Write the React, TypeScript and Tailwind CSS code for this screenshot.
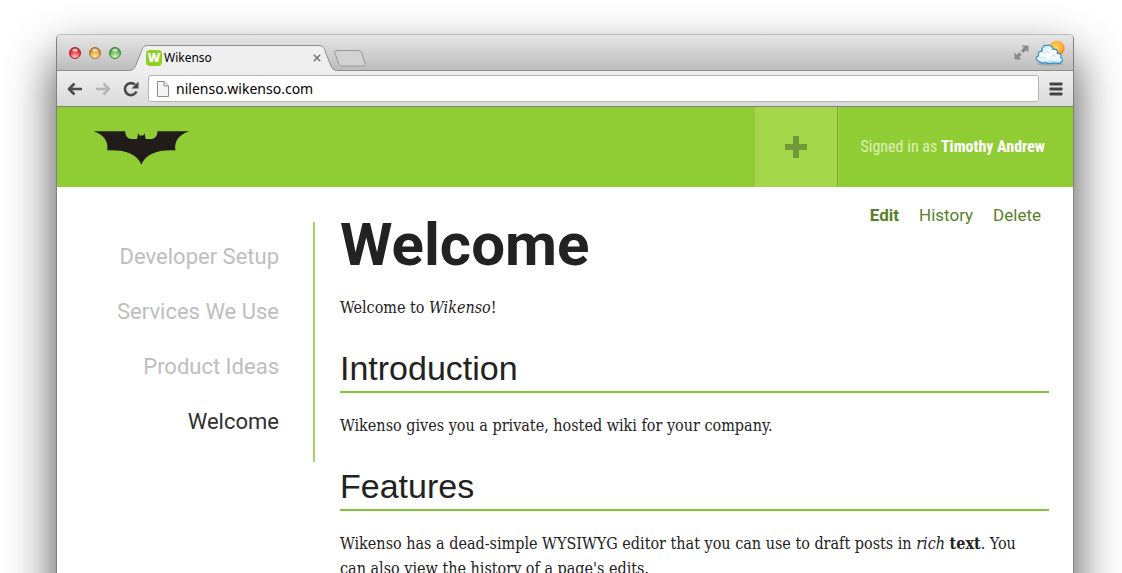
import type { ReactNode } from 'react';

const pages = [
  { name: 'Developer Setup', current: false },
  { name: 'Services We Use', current: false },
  { name: 'Product Ideas', current: false },
  { name: 'Welcome', current: true },
];

function TrafficLights() {
  const lights = [
    { label: 'Close window', id: 'red', edge: '#a3252c', mid: '#ef4650', glow: '#ffc9c9' },
    { label: 'Minimize window', id: 'amber', edge: '#a5702a', mid: '#f0ad45', glow: '#fff0b8' },
    { label: 'Zoom window', id: 'green', edge: '#42803a', mid: '#7cc565', glow: '#d9f8c4' },
  ];
  return (
    <div className="flex gap-2">
      {lights.map((l) => (
        <button key={l.id} type="button" aria-label={l.label} className="size-3">
          <svg viewBox="0 0 12 12" className="block size-3">
            <defs>
              <radialGradient id={l.id} cx="0.5" cy="0.85" r="0.8">
                <stop offset="0" stopColor={l.glow} />
                <stop offset="0.55" stopColor={l.mid} />
                <stop offset="1" stopColor={l.edge} />
              </radialGradient>
            </defs>
            <circle cx="6" cy="6" r="5.5" fill={`url(#${l.id})`} stroke={l.edge} strokeWidth="1" />
            <ellipse cx="6" cy="3.2" rx="2.8" ry="1.6" fill="#fff" opacity="0.65" />
          </svg>
        </button>
      ))}
    </div>
  );
}

function Tab() {
  return (
    <div className="relative ml-2 flex h-[25px] w-[212px] items-center self-end pl-[17px] pr-5">
      <svg viewBox="0 0 212 26" className="absolute left-0 top-0 h-[26px] w-[212px]" aria-hidden="true">
        <path
          d="M0 25.500C4 25.500 5.500 23.500 7 20L13 4.500C14.200 1.500 15.500 0.500 18.500 0.500H190C193 0.500 194.500 1.500 195.500 4.500L201.500 20C203 23.500 204.500 25.500 209 25.500V26H0Z"
          fill="#efefef"
        />
        <path
          d="M0 25.500C4 25.500 5.500 23.500 7 20L13 4.500C14.200 1.500 15.500 0.500 18.500 0.500H190C193 0.500 194.500 1.500 195.500 4.500L201.500 20C203 23.500 204.500 25.500 209 25.500"
          fill="none"
          stroke="#8d8d8d"
        />
      </svg>
      <span
        aria-hidden="true"
        className="relative flex size-4 items-center justify-center rounded-sm bg-[#8fd022] font-['Open_Sans',sans-serif] text-xs font-extrabold text-white"
      >
        W
      </span>
      <span className="relative ml-0.5 flex-1 font-['Noto_Sans',sans-serif] text-xs leading-4 text-black">Wikenso</span>
      <button type="button" aria-label="Close tab" className="relative">
        <svg viewBox="0 0 8 8" className="block size-2" stroke="#777" strokeWidth="1.6">
          <path d="M0.800 0.800L7.200 7.200M7.200 0.800L0.800 7.200" />
        </svg>
      </button>
    </div>
  );
}

function Weather() {
  return (
    <svg viewBox="0 0 32 28" className="h-7 w-8" aria-hidden="true">
      <defs>
        <radialGradient id="sun" cx="0.45" cy="0.4" r="0.6">
          <stop offset="0" stopColor="#ffd85c" />
          <stop offset="0.6" stopColor="#ffb13b" />
          <stop offset="1" stopColor="#ef7d1c" />
        </radialGradient>
        <linearGradient id="cloud" x1="0" y1="0" x2="0" y2="1">
          <stop offset="0" stopColor="#d3effd" />
          <stop offset="0.5" stopColor="#ffffff" />
          <stop offset="0.8" stopColor="#e8f7ff" />
          <stop offset="1" stopColor="#8fd0f4" />
        </linearGradient>
      </defs>
      <ellipse cx="15" cy="25" rx="13" ry="1.800" fill="#777" opacity="0.35" />
      <circle cx="22" cy="9.500" r="7.600" fill="url(#sun)" stroke="#f4b878" strokeWidth="0.800" />
      <path
        d="M4 22.500C0.500 21.500 0.500 17.500 3.500 17C2.500 14 4.500 12 7 12.500C6.500 8 9 6 12 6.500C15 5.500 18 7.500 18 10.200C21 9.500 23.500 12 22.500 14.500C25.500 14 27 16.500 25.500 18.500C28.500 19.500 28 23 25.500 23.700C23 25 20 24.300 18.500 23.800C15 25.300 12 24.500 10.500 23.500C8 24.500 5.500 24 4 22.500Z"
        fill="url(#cloud)"
        stroke="#3390c6"
        strokeWidth="1.200"
      />
      <path
        d="M9 15C10 12 13 12.500 14 14M16 18C17.500 15.500 20.500 16 21 18M5 19C6.500 17.500 9 18 9.500 20"
        fill="none"
        stroke="#a9dcf5"
        strokeWidth="1"
      />
    </svg>
  );
}

function TitleBar() {
  return (
    <div className="flex h-9 items-center border-b border-[#8d8d8d] bg-linear-to-b from-[#e6e6e6] to-[#bdbdbd] pl-3">
      <TrafficLights />
      <Tab />
      <button type="button" aria-label="New tab" className="-ml-2 mt-3">
        <svg viewBox="0 0 34 17" className="block h-[17px] w-[34px]" fill="#d2d2d2" stroke="#969696">
          <path d="M4 0.500H25C27 0.500 28 1 28.800 3L32 13C32.500 15 32 16 30 16H10C7.500 16 6.500 15.200 5.500 13L1.800 3C1 1 1.500 0.500 4 0.500Z" />
        </svg>
      </button>
      <div className="ml-auto flex items-center gap-1.5 pr-1.5">
        <button type="button" aria-label="Full screen">
          <svg viewBox="0 0 15 15" className="block size-[15px]" fill="#8b8b8b">
            <path d="M7.500 0.500H14.500V7.500L12.200 5.200L9.300 8.100L6.900 5.700L9.800 2.800ZM7.500 14.500H0.500V7.500L2.800 9.800L5.300 7.300L7.700 9.700L5.200 12.200Z" />
          </svg>
        </button>
        <Weather />
      </div>
    </div>
  );
}

function NavButton({ label, children }: { label: string; children: ReactNode }) {
  return (
    <button type="button" aria-label={label} className="shrink-0">
      <svg viewBox="0 0 16 16" className="block size-4" fill="none">
        {children}
      </svg>
    </button>
  );
}

function Toolbar() {
  return (
    <div className="flex h-9 items-center border-b border-[#7f7f7f] bg-linear-to-b from-[#efefef] to-[#dadada] px-2.5">
      <div className="flex gap-3">
        <NavButton label="Back">
          <path d="M15 8H2M7.500 2.500L2 8L7.500 13.500" stroke="#4b4b4b" strokeWidth="2.600" strokeLinejoin="round" />
        </NavButton>
        <NavButton label="Forward">
          <path d="M1 8H14M8.500 2.500L14 8L8.500 13.500" stroke="#b5b5b5" strokeWidth="2.600" strokeLinejoin="round" />
        </NavButton>
        <NavButton label="Reload">
          <path d="M13.500 10.500A6 6 0 1 1 12 3.600" stroke="#4b4b4b" strokeWidth="2.600" />
          <path d="M15.500 0.500V7.500H8.500Z" fill="#4b4b4b" />
        </NavButton>
      </div>
      <label className="ml-[9px] flex h-[27px] flex-1 items-center rounded-[3px] border border-[#b4b4b4] bg-white pl-2">
        <svg viewBox="0 0 12 16" className="h-4 w-3 shrink-0" fill="#f5f5f5" stroke="#8d8d8d" aria-hidden="true">
          <path d="M0.500 0.500H7L11.500 5V15.500H0.500ZM7 0.500V5H11.500" />
        </svg>
        <input
          aria-label="Address"
          defaultValue="nilenso.wikenso.com"
          className="ml-[7px] min-w-0 flex-1 bg-transparent font-['Noto_Sans',sans-serif] text-sm text-black outline-none"
        />
      </label>
      <button type="button" aria-label="Menu" className="ml-2.5">
        <svg viewBox="0 0 14 14" className="block size-3.5" fill="#444">
          <rect x="0.500" y="0.500" width="13" height="3" rx="0.800" />
          <rect x="0.500" y="5.500" width="13" height="3" rx="0.800" />
          <rect x="0.500" y="10.500" width="13" height="3" rx="0.800" />
        </svg>
      </button>
    </div>
  );
}

function SiteHeader() {
  return (
    <header className="flex h-20 bg-[#90cd34]">
      <a href="#home" aria-label="Home" className="ml-9 self-center pt-0.5">
        <svg viewBox="38 63 291 103" className="block h-[34px] w-[97px]" fill="#211c19">
          <path d="M38 64H134C135 80 142 87 153 87H170L173 70L177 77H189L193 70L196 87H213C224 87 231 80 232 64H328C295 75 283 94 286 122C235 119 196 132 183 165C170 132 131 119 80 122C83 94 71 75 38 64Z" />
        </svg>
      </a>
      <button
        type="button"
        aria-label="New page"
        className="ml-auto flex w-[83px] items-center justify-center border-r border-[#76a432] bg-[#a4d84a]"
      >
        <svg viewBox="0 0 22 22" className="size-[22px]" fill="#71993a">
          <path d="M8 0H14V8H22V14H14V22H8V14H0V8H8Z" />
        </svg>
      </button>
      <p className="flex min-w-[235px] items-center justify-end border-l border-[#a4d84a] pl-5 pr-7 font-['Roboto_Condensed',Roboto,sans-serif] text-base text-[#dcf0b9]">
        <span>
          Signed in as <b className="font-bold text-white">Timothy Andrew</b>
        </span>
      </p>
    </header>
  );
}

function Heading({ children }: { children: ReactNode }) {
  return (
    <h2 className="mt-[29px] border-b-2 border-[#80c638] pb-1 font-['Liberation_Sans',sans-serif] text-[34px] leading-[38px]">
      {children}
    </h2>
  );
}

export default function App() {
  return (
    <div className="h-screen overflow-hidden bg-white pl-14 pr-12 pt-[34px]">
      <div className="overflow-hidden rounded-t-[5px] border border-b-0 border-[#7f7f7f] border-t-[#bcbcbc] bg-white shadow-[0_24px_48px_rgba(0,0,0,0.72)]">
        <TitleBar />
        <Toolbar />
        <SiteHeader />
        <main className="flex items-start text-[#222]">
          <nav
            aria-label="Pages"
            className="mt-[35px] w-[258px] shrink-0 border-r-2 border-[#a0d468] pb-[13px] pr-[34px] pt-[7px] text-right font-['Roboto',sans-serif] text-[22px]"
          >
            <ul>
              {pages.map((p) => (
                <li key={p.name} className="leading-[55px]">
                  <a
                    href="#page"
                    aria-current={p.current ? 'page' : undefined}
                    className={p.current ? 'text-[#303030]' : 'text-[#bebebe]'}
                  >
                    {p.name}
                  </a>
                </li>
              ))}
            </ul>
          </nav>
          <article className="min-w-0 flex-1 pb-16 pl-[25px] pr-6 pt-7 font-['DejaVu_Serif_Condensed','Liberation_Serif',serif] text-base leading-[25px]">
            <div className="flex items-start justify-between font-['Roboto',sans-serif]">
              <h1 className="text-[60px] font-bold leading-[60px]">Welcome</h1>
              <nav aria-label="Page actions" className="-mt-3 flex gap-5 pr-2 text-[17px] leading-[25px] text-[#55822a]">
                <a href="#edit" className="font-bold">
                  Edit
                </a>
                <a href="#history">History</a>
                <a href="#delete">Delete</a>
              </nav>
            </div>
            <p className="mt-5 pr-4">
              Welcome to <em>Wikenso</em>!
            </p>
            <Heading>Introduction</Heading>
            <p className="mt-5 pr-4">Wikenso gives you a private, hosted wiki for your company.</p>
            <Heading>Features</Heading>
            <p className="mt-5 pr-4">
              Wikenso has a dead-simple WYSIWYG editor that you can use to draft posts in <em>rich</em> <b>text</b>. You
              can also view the history of a page's edits.
            </p>
          </article>
        </main>
      </div>
    </div>
  );
}
